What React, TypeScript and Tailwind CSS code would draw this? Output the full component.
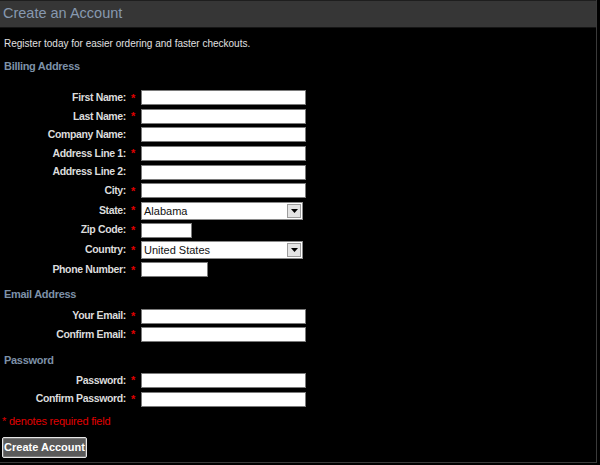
import { ReactNode } from 'react';

type Field = {
  label: string;
  required?: boolean;
  kind?: 'text' | 'select';
  width?: string;
  value?: string;
};

const billing: Field[] = [
  { label: 'First Name:', required: true },
  { label: 'Last Name:', required: true },
  { label: 'Company Name:' },
  { label: 'Address Line 1:', required: true },
  { label: 'Address Line 2:' },
  { label: 'City:', required: true },
  { label: 'State:', required: true, kind: 'select', value: 'Alabama' },
  { label: 'Zip Code:', required: true, width: 'w-[51px]' },
  { label: 'Country:', required: true, kind: 'select', value: 'United States' },
  { label: 'Phone Number:', required: true, width: 'w-[67px]' },
];

const email: Field[] = [
  { label: 'Your Email:', required: true },
  { label: 'Confirm Email:', required: true },
];

const password: Field[] = [
  { label: 'Password:', required: true },
  { label: 'Confirm Password:', required: true },
];

function SelectBox({ value }: { value: string }) {
  return (
    <div className="flex h-[18px] w-[162px] items-stretch border border-[#8a8a8a] bg-white">
      <span className="flex-1 pl-[2px] text-[11px] leading-[16px] text-[#111]">{value}</span>
      <span className="m-[1px] flex w-[14px] items-center justify-center border border-[#9c9c9c] bg-[#e4e4e4]">
        <svg width="7" height="4" viewBox="0 0 7 4">
          <path d="M0 0h7L3.5 4z" fill="#000" />
        </svg>
      </span>
    </div>
  );
}

function Row({ field }: { field: Field }) {
  const isSelect = field.kind === 'select';
  return (
    <div className={`flex items-center ${isSelect ? 'h-[21px]' : 'h-[18.6px]'}`}>
      <span className="w-[126px] text-right text-[10.5px] font-bold tracking-[-0.35px] text-[#dcdcdc]">{field.label}</span>
      <span className="w-[15px] pl-[5px] text-[11px] font-bold text-[#e00000]">{field.required ? '*' : ''}</span>
      {isSelect ? (
        <SelectBox value={field.value ?? ''} />
      ) : (
        <div className={`h-[15px] border border-[#7a7a7a] bg-white ${field.width ?? 'w-[165px]'}`} />
      )}
    </div>
  );
}

function Section({ title, children }: { title: string; children: ReactNode }) {
  return (
    <div>
      <h3 className="pl-[4px] text-[11px] font-bold tracking-[-0.3px] text-[#7d91a8]">{title}</h3>
      {children}
    </div>
  );
}

export default function App() {
  return (
    <div className="h-[465px] w-[600px] bg-black font-['Liberation_Sans',Arial,sans-serif]">
      <div className="h-[463px] w-[597px] border-r border-b border-[#3a3a3a]">
        <div className="flex h-[28px] items-center border-t border-b border-t-[#1e1e1e] border-b-[#151515] bg-[#363636] pl-[3px]">
          <h1 className="text-[14.5px] text-[#8799b0]">Create an Account</h1>
        </div>

        <p className="mt-[8px] pl-[4px] text-[10px] text-[#e0e0e0]">Register today for easier ordering and faster checkouts.</p>

        <div className="mt-[7px]">
          <Section title="Billing Address">
            <div className="mt-[14px]">
              {billing.map((f) => (
                <Row key={f.label} field={f} />
              ))}
            </div>
          </Section>
        </div>

        <div className="mt-[7px]">
          <Section title="Email Address">
            <div className="mt-[4px]">
              {email.map((f) => (
                <Row key={f.label} field={f} />
              ))}
            </div>
          </Section>
        </div>

        <div className="mt-[8px]">
          <Section title="Password">
            <div className="mt-[3px]">
              {password.map((f) => (
                <Row key={f.label} field={f} />
              ))}
            </div>
          </Section>
        </div>

        <p className="mt-[4px] pl-[2px] text-[11px] tracking-[-0.2px] text-[#e00000]">* denotes required field</p>

        <button className="mt-[8px] ml-[2px] h-[21px] w-[85px] rounded-[2px] border border-[#e6e6e6] bg-[#5a5a5a] text-[11px] font-bold text-white shadow-[inset_0_0_0_1px_#7a7a7a]">
          Create Account
        </button>
      </div>
    </div>
  );
}
